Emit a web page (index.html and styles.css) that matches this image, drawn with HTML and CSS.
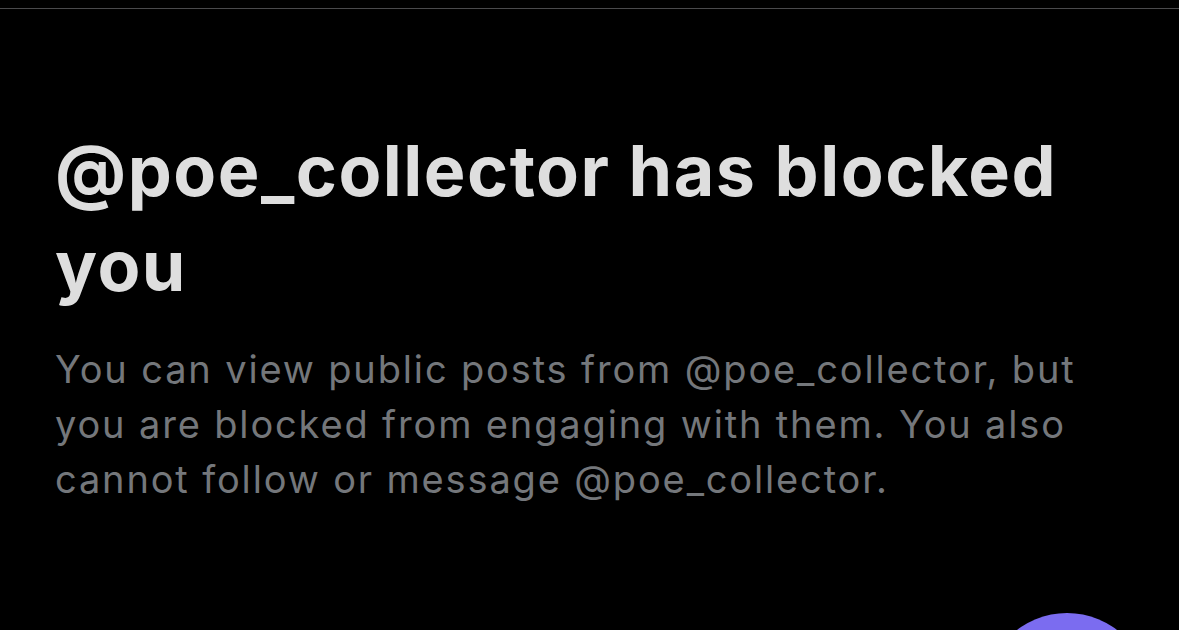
FILE: index.html
```html
<!DOCTYPE html>
<html lang="en">
<head>
<meta charset="utf-8">
<link rel="stylesheet" href="styles.css">
<title>Blocked</title>
</head>
<body>
<div class="screen">
  <div class="divider"></div>
  <main class="content">
    <h1 class="title">@poe_collector has blocked you</h1>
    <p class="desc">You can view public posts from @poe_collector, but you are blocked from engaging with them. You also cannot follow or message @poe_collector.</p>
  </main>
  <div class="fab"></div>
</div>
</body>
</html>
```

FILE: styles.css
```css
html, body {
  margin: 0;
  padding: 0;
  background: #000;
}
.screen {
  position: relative;
  width: 1179px;
  height: 630px;
  overflow: hidden;
  background: #000;
  padding-top: 8px;
  box-sizing: border-box;
}
.divider {
  height: 1px;
  background: #4a4a4c;
}
.content {
  padding: 114px 0 0 55px;
  width: 1045px;
}
.title {
  margin: 0;
  font-family: Inter, "Liberation Sans", sans-serif;
  font-weight: 700;
  font-size: 70px;
  line-height: 95px;
  color: #dedede;
  letter-spacing: 1.5px;
}
.desc {
  margin: 29px 0 0;
  font-family: Inter, "Liberation Sans", sans-serif;
  font-weight: 400;
  font-size: 38px;
  line-height: 55px;
  color: #74777b;
  letter-spacing: 1.85px;
}
.fab {
  position: absolute;
  left: 985px;
  top: 613px;
  width: 164px;
  height: 164px;
  border-radius: 50%;
  background: #7b6cf0;
}
```
